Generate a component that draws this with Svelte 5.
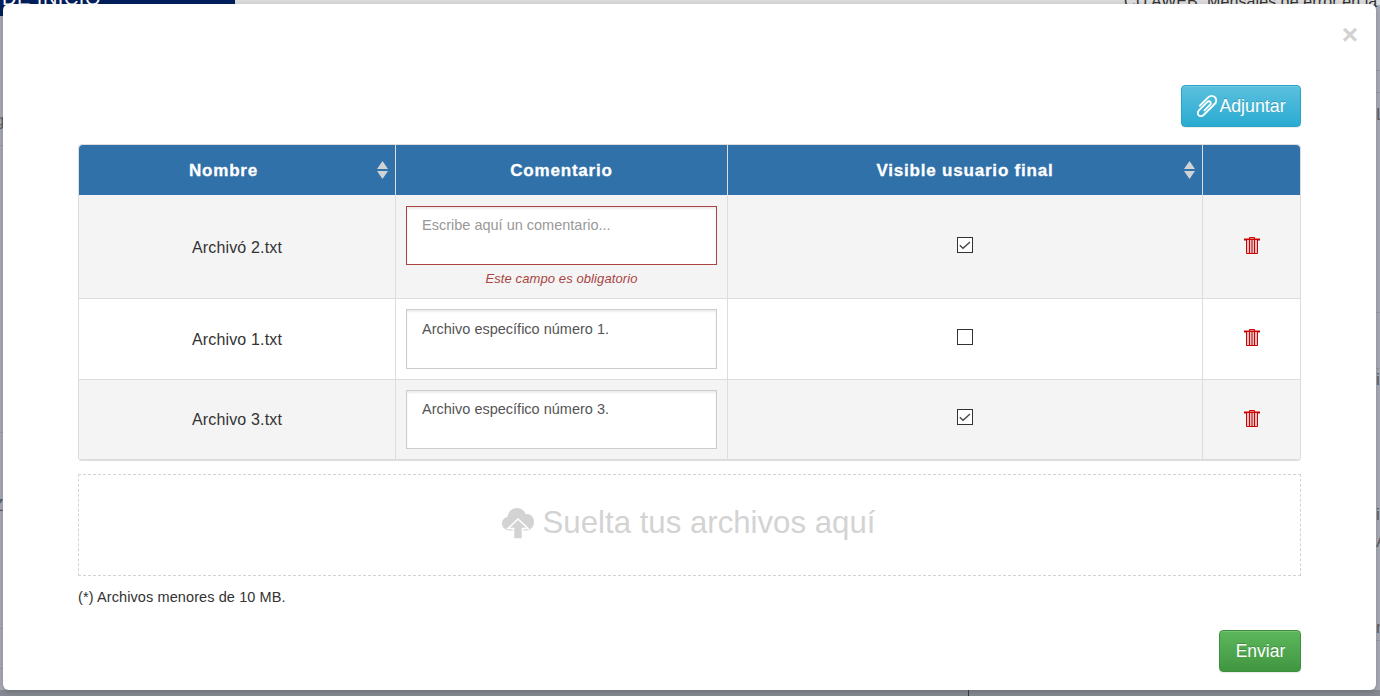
<script>
  const rows = [
    { name: 'Archivó 2.txt', comment: '', checked: true, error: true },
    { name: 'Archivo 1.txt', comment: 'Archivo específico número 1.', checked: false },
    { name: 'Archivo 3.txt', comment: 'Archivo específico número 3.', checked: true }
  ];
  const scraps = [
    { text: 'g', x: -5, y: 111 },
    { text: 'Z', x: -7, y: 496 },
    { text: 'L', x: 1376, y: 105 },
    { text: 'i', x: 1376, y: 370 },
    { text: 'i', x: 1376, y: 505 },
    { text: 'A', x: 1376, y: 532 },
    { text: 'r', x: 1376, y: 618 }
  ];
  const lines = [
    { x: 0, y: 145, w: 3 }, { x: 0, y: 432, w: 3 }, { x: 0, y: 628, w: 3 }, { x: 0, y: 668, w: 3 },
    { x: 1376, y: 70, w: 4 }, { x: 1376, y: 92, w: 4 }, { x: 1376, y: 312, w: 4 }, { x: 1376, y: 368, w: 4 }, { x: 1376, y: 640, w: 4 }
  ];
</script>

<div class="page">
  <div class="behind">
    <div class="strip"></div>
    <div class="nav"><span>DE INICIO</span></div>
    <div class="title">CU AWEB. Mensajes de error en la</div>
    {#each lines as l}
      <i class="line" style="left:{l.x}px;top:{l.y}px;width:{l.w}px"></i>
    {/each}
    {#each scraps as s}
      <span class="scrap" style="left:{s.x}px;top:{s.y}px">{s.text}</span>
    {/each}
    <div class="bottom"><i></i></div>
  </div>

  <div class="modal">
    <button class="close" aria-label="Cerrar">×</button>
    <div class="toolbar">
      <button class="btn info">
        <svg class="clip" viewBox="0 0 1792 1792"><path fill="currentColor" d="M1596 1385q0 117-79 196t-196 79q-135 0-235-100l-777-776q-113-115-113-271 0-159 110-270t269-111q158 0 273 113l605 606q10 10 10 22 0 16-30.500 46.500t-46.500 30.500q-13 0-23-10l-606-607q-79-77-181-77-106 0-179 75t-73 181q0 105 76 181l776 777q63 63 145 63 64 0 106-42t42-106q0-82-63-145l-581-581q-26-24-60-24-29 0-48 19t-19 48q0 32 25 59l410 410q10 10 10 22 0 16-31 47t-47 31q-12 0-22-10l-410-410q-63-61-63-149 0-82 57-139t139-57q88 0 149 63l581 581q100 98 100 235z" transform="matrix(-1 0 0 1 1792 0)"/></svg>
        Adjuntar
      </button>
    </div>

    <table>
      <colgroup><col class="c1" /><col class="c2" /><col class="c3" /><col /></colgroup>
      <thead>
        <tr>
          <th class="first"><span>Nombre</span><i class="sort"></i></th>
          <th>Comentario</th>
          <th><span>Visible usuario final</span><i class="sort"></i></th>
          <th></th>
        </tr>
      </thead>
      <tbody>
        {#each rows as r}
          <tr class:err={r.error}>
            <td class="name">{r.name}</td>
            <td class="comment">
              <textarea class:invalid={r.error} placeholder="Escribe aquí un comentario..." value={r.comment}></textarea>
              {#if r.error}<div class="msg">Este campo es obligatorio</div>{/if}
            </td>
            <td class="icon-cell">
              <svg class="check" viewBox="0 0 16 16">
                <rect x="0.5" y="0.5" width="15" height="15" fill="#fff" stroke="#333" />
                {#if r.checked}<path d="M2.800 8.300 L6 11.300 L13 5" fill="none" stroke="#444" stroke-width="1.300" />{/if}
              </svg>
            </td>
            <td class="icon-cell">
              <svg class="trash" viewBox="0 0 16 17">
                <path d="M5.500 2.500V.5h5v2" fill="none" stroke="#c00" />
                <path d="M0 2.500h16" stroke="#c00" stroke-width="2" />
                <path d="M2.500 3v13.500h11V3" fill="#e9c4c4" stroke="#c00" />
                <path d="M5.500 3v13M8 3v13M10.500 3v13" stroke="#c00" />
              </svg>
            </td>
          </tr>
        {/each}
      </tbody>
    </table>

    <div class="drop">
      <svg class="cloud" viewBox="0 0 32 32">
        <path fill="#d3d3d3" d="M8 23.500C3.500 23.500 0 20.500 0 16.500c0-3.500 2.500-6 5.500-6.500C6 5 10 1 15 1c4 0 7.500 2.500 8.500 6 .5 0 1-.1 1.500-.1 4 0 7 3.500 7 8s-3.500 8.500-8 8.500z" />
        <path fill="#d3d3d3" stroke="#fff" stroke-width="1.600" stroke-linejoin="miter" d="M16 12 L26 21.500 H20.500 V32 H11.500 V21.500 H6z" />
      </svg>
      <span>Suelta tus archivos aquí</span>
    </div>

    <p class="note">(*) Archivos menores de 10 MB.</p>

    <div class="footer"><button class="btn success">Enviar</button></div>
  </div>
</div>

<style>
  :global(body) { margin: 0; font-family: "Liberation Sans", Arial, sans-serif; }
  .page {
    position: relative;
    width: 1380px;
    height: 696px;
    overflow: hidden;
    background: #a8abb5;
    padding: 4px 4px 6px 3px;
    box-sizing: border-box;
  }
  .behind { position: absolute; inset: 0; overflow: hidden; }
  .strip { position: absolute; left: 235px; right: 0; top: 0; height: 5px; background: #dcdcdc; }
  .bottom { position: absolute; left: 0; right: 0; bottom: 0; height: 6px; background: #878a92; }
  .bottom i { position: absolute; left: 968px; top: 0; width: 1px; height: 6px; background: #3a3d48; }
  .line { position: absolute; height: 1px; background: #9a9da8; }
  .scrap { position: absolute; font-size: 17px; line-height: 20px; color: #5c5e66; }
  .nav {
    position: absolute;
    left: 0; top: 0;
    width: 235px; height: 16px;
    background: #001f5c;
    color: #fff;
    font-size: 20px;
    overflow: hidden;
  }
  .nav span { position: absolute; left: 2px; top: -13px; white-space: nowrap; letter-spacing: .5px; }
  .title {
    position: absolute;
    right: 0; top: -8px;
    width: 256px;
    white-space: nowrap;
    overflow: hidden;
    font-size: 16px;
    letter-spacing: .1px;
    color: #333;
    line-height: 20px;
  }
  .modal {
    position: relative;
    height: 100%;
    box-sizing: border-box;
    background: #fff;
    border-radius: 6px;
    box-shadow: 0 2px 6px rgba(0,0,0,.2);
    padding: 81px 75px 0;
    display: flex;
    flex-direction: column;
    color: #333;
  }
  .close {
    position: absolute;
    right: 18px;
    top: 17px;
    padding: 0;
    border: 0;
    background: none;
    font: bold 28px/28px "Liberation Sans", Arial, sans-serif;
    color: #d2d2d2;
  }
  .toolbar { display: flex; justify-content: flex-end; margin-bottom: 17px; }
  .btn {
    font: 17.800px/24px "Liberation Sans", Arial, sans-serif;
    color: #fff;
    height: 42px;
    border-radius: 4px;
    border: 1px solid;
    box-sizing: border-box;
    padding: 0;
    text-shadow: 0 -1px 0 rgba(0,0,0,.2);
    box-shadow: inset 0 1px 0 rgba(255,255,255,.15), 0 1px 1px rgba(0,0,0,.08);
    display: inline-flex;
    align-items: center;
    justify-content: center;
  }
  .info {
    width: 120px;
    padding-left: 2px;
    background: linear-gradient(#5bc0de, #2aabd2);
    border-color: #28a4c9;
  }
  .success {
    width: 82px;
    font-size: 17.500px;
    padding-left: 1px;
    background: linear-gradient(#5cb85c, #419641);
    border-color: #3e8f3e;
  }
  .clip { width: 26px; height: 26px; margin: 0 -1px 0 -4px; }

  table {
    width: 1223px;
    border-collapse: separate;
    border-spacing: 0;
    table-layout: fixed;
    border: 1px solid #ddd;
    border-bottom-width: 2px;
    border-radius: 4px;
    font-size: 16px;
  }
  .c1 { width: 316px; }
  .c2 { width: 332px; }
  .c3 { width: 475px; }
  th {
    position: relative;
    height: 50px;
    padding: 1px 0 0;
    box-sizing: border-box;
    background: #3071a9;
    color: #fff;
    font-size: 17px;
    letter-spacing: .8px;
    -webkit-text-stroke: .3px #fff;
    border-left: 1px solid #ddd;
  }
  th.first { padding-right: 27px; }
  th:first-child { border-left: 0; border-top-left-radius: 4px; }
  th:last-child { border-top-right-radius: 4px; }
  .sort {
    position: absolute;
    right: 7px;
    top: 16px;
    width: 11px;
    height: 18px;
    background: #d0d3d6;
    clip-path: polygon(50% 0, 100% 8px, 0 8px, 0 10px, 100% 10px, 50% 100%, 0 10px, 0 8px);
  }
  td {
    padding: 0;
    text-align: center;
    vertical-align: middle;
    border-top: 1px solid #ddd;
    border-left: 1px solid #ddd;
    color: #333;
  }
  td:first-child { border-left: 0; }
  tbody tr:first-child td { border-top: 0; }
  tbody tr:nth-child(odd) td { background: #f4f4f4; }
  .name { letter-spacing: .15px; padding-top: 2px; }
  tr:last-child .name { padding-top: 0; }
  .comment { padding: 10px; vertical-align: top; }
  tr.err .comment { padding: 11px 10px; }
  tr:last-child textarea { height: 59px; padding-top: 8px; }
  textarea {
    display: block;
    width: 311px;
    height: 60px;
    box-sizing: border-box;
    padding: 9px 15px;
    border: 1px solid #ccc;
    background: #fff;
    box-shadow: inset 0 2px 2px rgba(0,0,0,.075);
    font: 14.500px/20px "Liberation Sans", Arial, sans-serif;
    color: #555;
    resize: none;
    overflow: hidden;
    outline: 0;
    border-radius: 0;
  }
  textarea::placeholder { color: #999; opacity: 1; }
  textarea.invalid { border-color: #a94442; height: 59px; padding-top: 8px; }
  .msg {
    margin-top: 6px;
    font-size: 13px;
    letter-spacing: .1px;
    line-height: 16px;
    font-style: italic;
    color: #a94442;
  }
  .icon-cell svg { display: block; margin: -4px auto 0; }
  tr:last-child .icon-cell .check { margin-top: -6px; }
  .icon-cell .trash { margin-top: -3px; }
  .check { width: 16px; height: 16px; }
  .trash { width: 16px; height: 17px; }

  .drop {
    margin-top: 13px;
    height: 102px;
    box-sizing: border-box;
    border: 1px dashed #d3d3d3;
    padding: 0 2px 4px 0;
    display: flex;
    align-items: center;
    justify-content: center;
    gap: 9px;
    color: #d3d3d3;
    font-size: 31.200px;
  }
  .cloud { width: 32px; height: 32px; }
  .note { margin: 11px 0 0; font-size: 14.500px; letter-spacing: .1px; line-height: 20px; }
  .footer { display: flex; justify-content: flex-end; margin-top: 23px; }
</style>
